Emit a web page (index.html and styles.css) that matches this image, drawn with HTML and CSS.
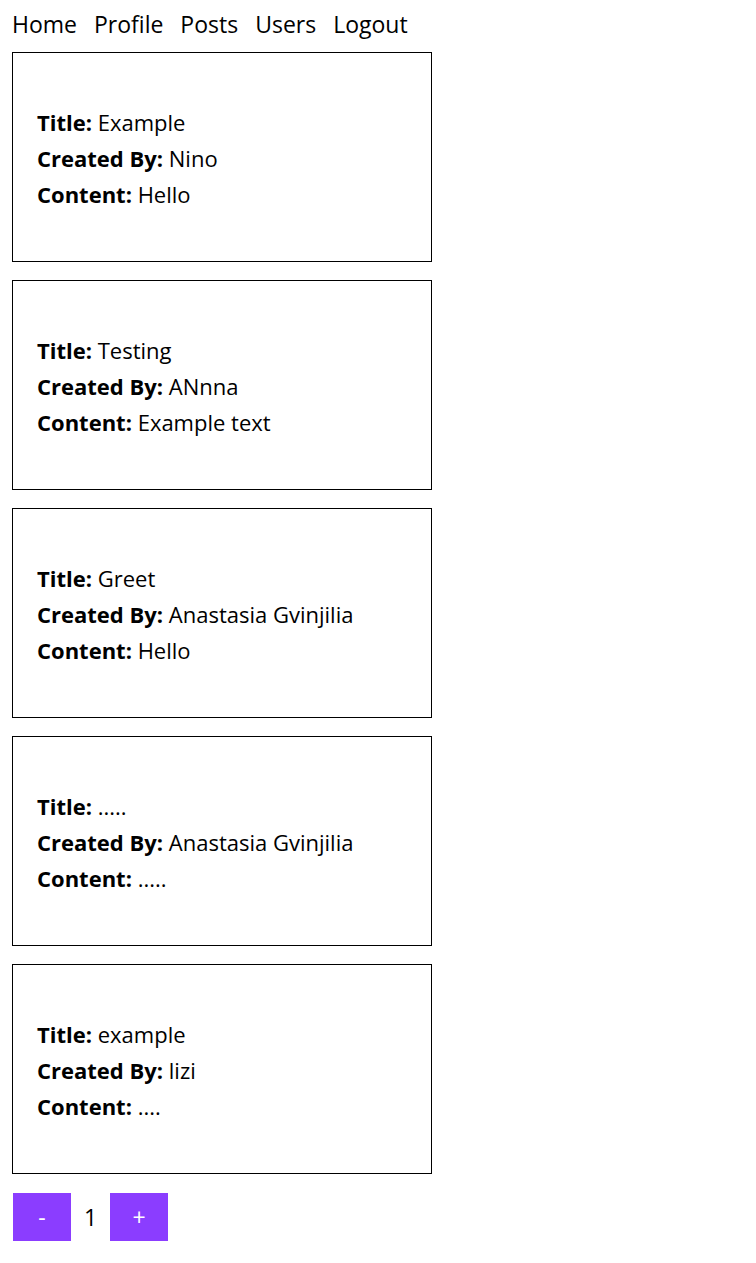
FILE: index.html
```html
<!DOCTYPE html>
<html>
<head>
<meta charset="utf-8">
<link rel="stylesheet" href="styles.css">
</head>
<body>
<nav class="nav">
  <a class="nav-link">Home</a>
  <a class="nav-link">Profile</a>
  <a class="nav-link">Posts</a>
  <a class="nav-link">Users</a>
  <a class="nav-link">Logout</a>
</nav>
<main class="posts">
  <div class="post">
    <div class="line"><b>Title:</b> Example</div>
    <div class="line"><b>Created By:</b> Nino</div>
    <div class="line"><b>Content:</b> Hello</div>
  </div>
  <div class="post">
    <div class="line"><b>Title:</b> Testing</div>
    <div class="line"><b>Created By:</b> ANnna</div>
    <div class="line"><b>Content:</b> Example text</div>
  </div>
  <div class="post">
    <div class="line"><b>Title:</b> Greet</div>
    <div class="line"><b>Created By:</b> Anastasia Gvinjilia</div>
    <div class="line"><b>Content:</b> Hello</div>
  </div>
  <div class="post">
    <div class="line"><b>Title:</b> .....</div>
    <div class="line"><b>Created By:</b> Anastasia Gvinjilia</div>
    <div class="line"><b>Content:</b> .....</div>
  </div>
  <div class="post">
    <div class="line"><b>Title:</b> example</div>
    <div class="line"><b>Created By:</b> lizi</div>
    <div class="line"><b>Content:</b> ....</div>
  </div>
</main>
<div class="pager">
  <button class="btn">-</button>
  <span class="page">1</span>
  <button class="btn">+</button>
</div>
</body>
</html>
```
FILE: styles.css
```css
body {
  margin: 0;
  padding: 6px 12px 0;
  font-family: "Open Sans", "Noto Sans", sans-serif;
  font-size: 23px;
  color: #000;
  background: #fff;
}
.nav {
  display: flex;
  gap: 17px;
  height: 36px;
  align-items: center;
  margin-bottom: 10px;
}
.nav-link {
  color: #000;
  text-decoration: none;
}
.posts {
  display: flex;
  flex-direction: column;
  gap: 18px;
}
.post {
  width: 370px;
  height: 206px;
  border: 1px solid #000;
  padding: 2px 24px 0;
  display: flex;
  flex-direction: column;
  justify-content: center;
  font-size: 22px;
}
.line {
  line-height: 36px;
}
.line b {
  font-weight: 700;
}
.pager {
  display: flex;
  align-items: center;
  margin-top: 19px;
  margin-left: 1px;
}
.btn {
  width: 58px;
  height: 48px;
  border: none;
  background: #8b3dff;
  color: #fff;
  font-family: "Open Sans", sans-serif;
  font-size: 23px;
  padding: 0;
}
.page {
  width: 39px;
  text-align: center;
  font-size: 23px;
}
```
